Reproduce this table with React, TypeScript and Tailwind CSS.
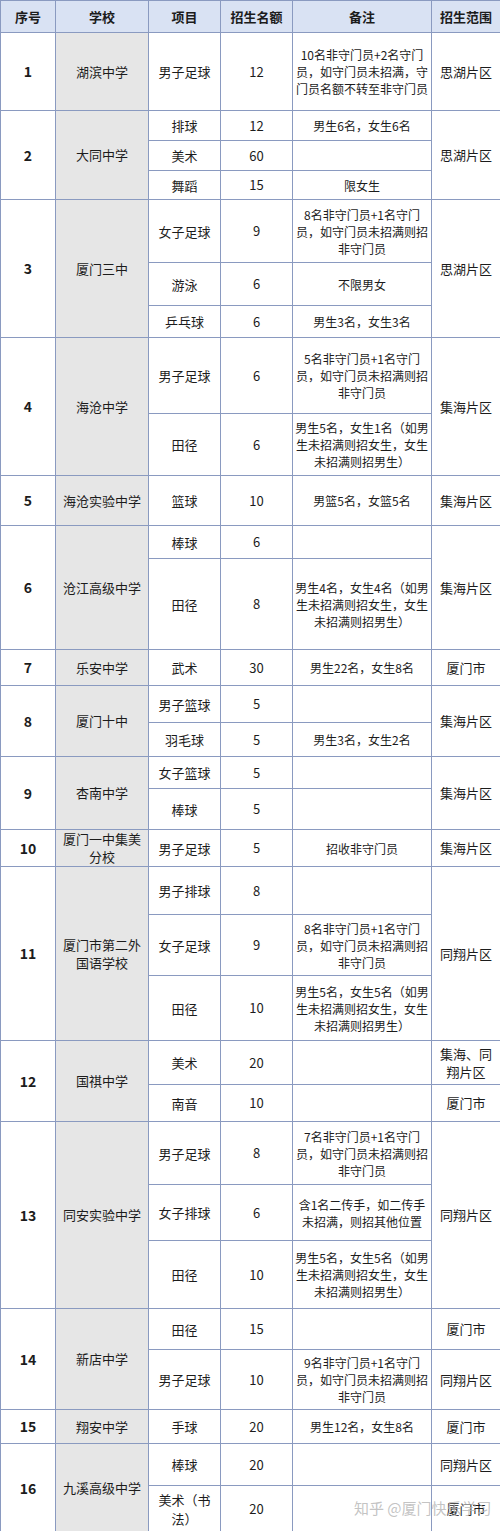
type Item = {
  proj: string[];
  quota: string;
  note?: string[];
  h: string;
  range?: string[];
};

type School = {
  no: string;
  name: string[];
  range?: string[];
  items: Item[];
};

const keeper = (n: string) => [`${n}名非守门员+1名守门`, "员，如守门员未招满则招", "非守门员"];
const mixed = (m: string, f: string) => [`男生${m}名，女生${f}名（如男`, "生未招满则招女生，女生", "未招满则招男生）"];

const schools: School[] = [
  {
    no: "1",
    name: ["湖滨中学"],
    range: ["思湖片区"],
    items: [
      {
        proj: ["男子足球"],
        quota: "12",
        note: ["10名非守门员+2名守门", "员，如守门员未招满，守", "门员名额不转至非守门员"],
        h: "h-[78px]",
      },
    ],
  },
  {
    no: "2",
    name: ["大同中学"],
    range: ["思湖片区"],
    items: [
      { proj: ["排球"], quota: "12", note: ["男生6名，女生6名"], h: "h-[30px]" },
      { proj: ["美术"], quota: "60", h: "h-[30px]" },
      { proj: ["舞蹈"], quota: "15", note: ["限女生"], h: "h-[29px]" },
    ],
  },
  {
    no: "3",
    name: ["厦门三中"],
    range: ["思湖片区"],
    items: [
      { proj: ["女子足球"], quota: "9", note: keeper("8"), h: "h-[63px]" },
      { proj: ["游泳"], quota: "6", note: ["不限男女"], h: "h-[43px]" },
      { proj: ["乒乓球"], quota: "6", note: ["男生3名，女生3名"], h: "h-[32px]" },
    ],
  },
  {
    no: "4",
    name: ["海沧中学"],
    range: ["集海片区"],
    items: [
      { proj: ["男子足球"], quota: "6", note: keeper("5"), h: "h-[76px]" },
      { proj: ["田径"], quota: "6", note: mixed("5", "1"), h: "h-[62px]" },
    ],
  },
  {
    no: "5",
    name: ["海沧实验中学"],
    range: ["集海片区"],
    items: [{ proj: ["篮球"], quota: "10", note: ["男篮5名，女篮5名"], h: "h-[50px]" }],
  },
  {
    no: "6",
    name: ["沧江高级中学"],
    range: ["集海片区"],
    items: [
      { proj: ["棒球"], quota: "6", h: "h-[33px]" },
      { proj: ["田径"], quota: "8", note: mixed("4", "4"), h: "h-[91px]" },
    ],
  },
  {
    no: "7",
    name: ["乐安中学"],
    range: ["厦门市"],
    items: [{ proj: ["武术"], quota: "30", note: ["男生22名，女生8名"], h: "h-[36px]" }],
  },
  {
    no: "8",
    name: ["厦门十中"],
    range: ["集海片区"],
    items: [
      { proj: ["男子篮球"], quota: "5", h: "h-[37px]" },
      { proj: ["羽毛球"], quota: "5", note: ["男生3名，女生2名"], h: "h-[34px]" },
    ],
  },
  {
    no: "9",
    name: ["杏南中学"],
    range: ["集海片区"],
    items: [
      { proj: ["女子篮球"], quota: "5", h: "h-[32px]" },
      { proj: ["棒球"], quota: "5", h: "h-[41px]" },
    ],
  },
  {
    no: "10",
    name: ["厦门一中集美", "分校"],
    range: ["集海片区"],
    items: [{ proj: ["男子足球"], quota: "5", note: ["招收非守门员"], h: "h-[36px]" }],
  },
  {
    no: "11",
    name: ["厦门市第二外", "国语学校"],
    range: ["同翔片区"],
    items: [
      { proj: ["男子排球"], quota: "8", h: "h-[48px]" },
      { proj: ["女子足球"], quota: "9", note: keeper("8"), h: "h-[61px]" },
      { proj: ["田径"], quota: "10", note: mixed("5", "5"), h: "h-[65px]" },
    ],
  },
  {
    no: "12",
    name: ["国祺中学"],
    items: [
      { proj: ["美术"], quota: "20", h: "h-[44px]", range: ["集海、同", "翔片区"] },
      { proj: ["南音"], quota: "10", h: "h-[37px]", range: ["厦门市"] },
    ],
  },
  {
    no: "13",
    name: ["同安实验中学"],
    range: ["同翔片区"],
    items: [
      { proj: ["男子足球"], quota: "8", note: keeper("7"), h: "h-[63px]" },
      {
        proj: ["女子排球"],
        quota: "6",
        note: ["含1名二传手，如二传手", "未招满，则招其他位置"],
        h: "h-[56px]",
      },
      { proj: ["田径"], quota: "10", note: mixed("5", "5"), h: "h-[68px]" },
    ],
  },
  {
    no: "14",
    name: ["新店中学"],
    items: [
      { proj: ["田径"], quota: "15", h: "h-[41px]", range: ["厦门市"] },
      { proj: ["男子足球"], quota: "10", note: keeper("9"), h: "h-[60px]", range: ["同翔片区"] },
    ],
  },
  {
    no: "15",
    name: ["翔安中学"],
    range: ["厦门市"],
    items: [{ proj: ["手球"], quota: "20", note: ["男生12名，女生8名"], h: "h-[34px]" }],
  },
  {
    no: "16",
    name: ["九溪高级中学"],
    items: [
      { proj: ["棒球"], quota: "20", h: "h-[42px]", range: ["同翔片区"] },
      { proj: ["美术（书", "法）"], quota: "20", h: "h-[47px]", range: ["厦门市"] },
    ],
  },
];

const headers = ["序号", "学校", "项目", "招生名额", "备注", "招生范围"];

function Lines({ lines, className }: { lines?: string[]; className?: string }) {
  if (!lines) return null;
  return (
    <div className={className}>
      {lines.map((l) => (
        <div key={l} className="whitespace-nowrap">
          {l}
        </div>
      ))}
    </div>
  );
}

const cell = "border border-[#8a9ac0] text-center align-middle p-0";

export default function App() {
  return (
    <div className="relative w-[500px] h-[1531px] bg-white overflow-hidden font-['Noto_Sans_CJK_SC',sans-serif] text-[#1c1c1c]">
      <table className="w-[500px] table-fixed border-collapse">
        <colgroup>
          <col className="w-[55px]" />
          <col className="w-[93px]" />
          <col className="w-[72px]" />
          <col className="w-[72px]" />
          <col className="w-[139px]" />
          <col className="w-[69px]" />
        </colgroup>
        <thead>
          <tr className="h-[32px] bg-[#d9e2f3]">
            {headers.map((h) => (
              <th key={h} className={`${cell} text-[13px] font-bold`}>
                {h}
              </th>
            ))}
          </tr>
        </thead>
        <tbody>
          {schools.map((s) =>
            s.items.map((it, i) => (
              <tr key={`${s.no}-${i}`} className={it.h}>
                {i === 0 && (
                  <td rowSpan={s.items.length} className={`${cell} text-[14px] font-bold`}>
                    {s.no}
                  </td>
                )}
                {i === 0 && (
                  <td rowSpan={s.items.length} className={`${cell} bg-[#e6e6e6] text-[13px] leading-[18px]`}>
                    <Lines lines={s.name} />
                  </td>
                )}
                <td className={`${cell} text-[13px] leading-[19px]`}>
                  <Lines lines={it.proj} />
                </td>
                <td className={`${cell} text-[13px]`}>{it.quota}</td>
                <td className={`${cell} text-[12px] leading-[17px]`}>
                  <Lines lines={it.note} />
                </td>
                {s.range
                  ? i === 0 && (
                      <td rowSpan={s.items.length} className={`${cell} text-[13px]`}>
                        <Lines lines={s.range} />
                      </td>
                    )
                  : (
                      <td className={`${cell} text-[13px] leading-[18px]`}>
                        <Lines lines={it.range} />
                      </td>
                    )}
              </tr>
            ))
          )}
        </tbody>
      </table>
      {/* watermark */}
      <span className="absolute left-[354px] top-[1497px] text-[15px] text-[#b4b4b4]/80 whitespace-nowrap">
        知乎 @厦门快乐学习
      </span>
    </div>
  );
}
